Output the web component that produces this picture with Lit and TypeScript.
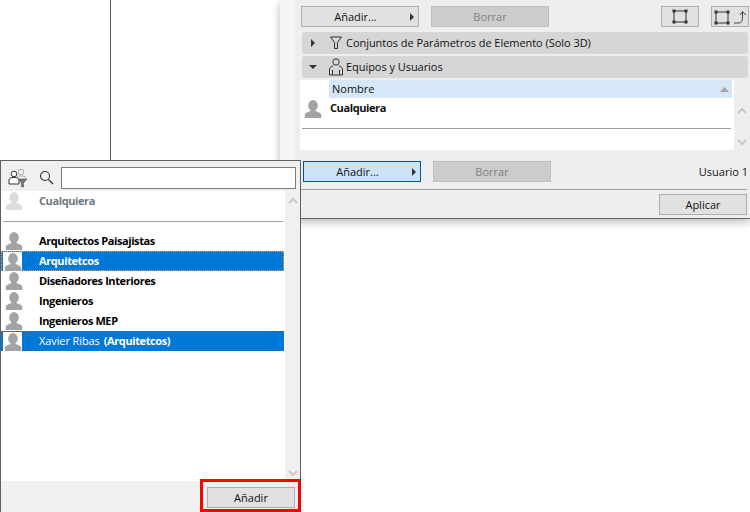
import { LitElement, html, css, svg } from "lit";
import { customElement } from "lit/decorators.js";

const person = (faded = false) => html`<svg class="person ${faded ? "faded" : ""}" viewBox="0 0 18 18" width="18" height="18">
  <ellipse cx="9" cy="5.5" rx="4.8" ry="5.4" fill="currentColor"/>
  <path d="M6.5 9.5 L6.5 11 C4 12 1.2 12.5 .8 14.5 L.8 18 L17.2 18 L17.2 14.5 C16.8 12.5 14 12 11.500 11 L11.500 9.500Z" fill="currentColor"/>
</svg>`;

const tri = svg`<path d="M0 0 L4 4 L0 8Z" fill="#333"/>`;
const arrowRight = html`<svg class="arrow" width="5" height="8" viewBox="0 0 5 8">${tri}</svg>`;
const frame = svg`<path d="M2 2H14V13H2Z" fill="none" stroke="#333" stroke-width="1"/>
  <rect x="0.500" y="0.500" width="3" height="3" fill="#333"/><rect x="12.500" y="0.500" width="3" height="3" fill="#333"/>
  <rect x="0.500" y="11.500" width="3" height="3" fill="#333"/><rect x="12.500" y="11.500" width="3" height="3" fill="#333"/>`;
const chevUp = html`<svg width="10" height="7" viewBox="0 0 10 7"><path d="M1 6 L5 2 L9 6" fill="none" stroke="#c8c8c8" stroke-width="2"/></svg>`;
const chevDown = html`<svg width="10" height="7" viewBox="0 0 10 7"><path d="M1 1 L5 5 L9 1" fill="none" stroke="#c8c8c8" stroke-width="2"/></svg>`;

@customElement("app-root")
export class AppRoot extends LitElement {
  static styles = css`
    :host { display: block; width: 750px; height: 512px; position: relative; overflow: hidden; background: #fff;
      font-family: "Open Sans", "Noto Sans", sans-serif; font-size: 11px; color: #111; }
    * { box-sizing: border-box; }
    .vline { position: absolute; left: 110px; top: 0; width: 1px; height: 160px; background: #555; }
    .main { position: absolute; left: 280px; top: 0; width: 470px; height: 219px; background: linear-gradient(to right, #f5f5f5 15px, #eeeeee 15px);
      border-bottom: 1px solid #666; box-shadow: 0 3px 8px rgba(0,0,0,.28); display: flex; flex-direction: column; }
    .btn { height: 21px; width: 118px; display: flex; align-items: center; justify-content: center; position: relative;
      background: #e1e1e1; border: 1px solid #adadad; }
    .btn.menu { padding-right: 9px; }
    .btn .arrow { position: absolute; right: 3px; top: 6px; }
    .btn.off { background: #cccccc; border-color: #bfbfbf; color: #7f7f7f; }
    .btn.hot { background: #cce4f7; border-color: #005499; }
    .btn.small { width: 88px; }
    .btn.icon { width: 38px; }
    .row1 { display: flex; gap: 12px; margin-top: 6px; padding: 0 1px 0 21px; }
    .spacer { flex: 1; }
    .sec { height: 22px; margin: 0 2px 0 22px; background: #d6d6d6; border-radius: 3px; display: flex; align-items: center; }
    .sec .tw { width: 22px; display: flex; justify-content: center; }
    .sec .ic { width: 22px; padding-left: 2px; display: flex; justify-content: center; }
    .sec .lb { padding-bottom: 2px; letter-spacing: -0.045px; }
    .s1 { margin-top: 5px; }
    .s2 { margin-top: 2px; }
    .table { margin: 2px 0 0 20px; height: 70px; display: flex; }
    .tbody { width: 434px; background: #fff; display: flex; flex-direction: column; }
    .thead { margin-left: 29px; width: 403px; height: 18px; background: #d6e8f7; display: flex; align-items: center; justify-content: space-between; padding: 0 3px 0 3px; }
    .thead span { padding-bottom: 2px; }
    .trow { display: flex; align-items: center; height: 20px; padding-left: 4px; gap: 8px; font-weight: 700; margin-top: -1px; letter-spacing: -0.4px; }
    .trow .person { margin-top: 4px; }
    .tdiv { height: 1px; background: #a0a0a0; margin: 11px 3px 0 2px; }
    .tscroll { flex: 1; display: flex; flex-direction: column; align-items: center; justify-content: space-between; padding: 27px 0 4px; margin-right: 1px; }
    .row2 { display: flex; gap: 12px; align-items: center; margin-top: 11px; padding: 0 2px 0 23px; }
    .hdiv { height: 1px; background: #a0a0a0; margin: 7px 3px 0 21px; }
    .row3 { display: flex; justify-content: flex-end; padding-right: 3px; margin-top: 4px; }
    .person { display: block; color: #a3a3a3; flex: none; filter: blur(.4px); }
    .person.faded { color: #dcdcdc; }

    .pop { position: absolute; left: 0; top: 160px; width: 301px; height: 352px; background: #f0f0f0; border: 1px solid #5f5f5f; border-bottom: 0; display: flex; flex-direction: column; }
    .tools { height: 30px; display: flex; align-items: center; padding: 0 4px 0 7px; }
    .tools .search { margin-left: 11px; display: block; }
    .tools input { margin-left: 7px; flex: 1; min-width: 0; height: 22px; border: 1px solid #7a7a7a; background: #fff; margin-top: 4px; }
    .tools svg { margin-top: 3px; }
    .body { flex: 1; min-height: 0; display: flex; }
    .list { width: 284px; background: #fff; display: flex; flex-direction: column; }
    .scroll { flex: 1; display: flex; flex-direction: column; align-items: center; justify-content: space-between; padding: 6px 0 4px; }
    .item { height: 20px; display: flex; align-items: center; padding: 0 0 2px 38px; position: relative; font-weight: 700; color: #000; flex: none; letter-spacing: -0.4px; }
    .item .person { position: absolute; left: 4px; top: 1px; }
    .item.dis { color: #6f7780; }
    .item.sel { background: #0078d7; color: #fff; margin-right: 1px; }
    .item.focus { outline: 1px dotted #f0a050; outline-offset: -1px; }
    .item.sel .pic { position: absolute; left: 2px; top: 1px; width: 19px; height: 19px; background: #fff; }
    .item.sel .person { left: 3px; top: 2px; }
    .item .nm { font-weight: 400; margin-right: 4px; letter-spacing: -0.1px; }
    .ldiv { height: 1px; background: #a0a0a0; margin: 10px 2px 9px 2px; flex: none; }
    .foot { height: 31px; display: flex; justify-content: flex-end; padding: 6px 5px 0 0; }
    .mark { position: absolute; left: 200px; top: 479px; width: 101px; height: 33px; border: 3px solid #f00; pointer-events: none; }
  `;

  render() {
    return html`
      <div class="vline"></div>
      <section class="main">
        <div class="row1">
          <div class="btn menu">Añadir...${arrowRight}</div>
          <div class="btn off">Borrar</div>
          <div class="spacer"></div>
          <div class="btn icon"><svg width="16" height="15" viewBox="0 0 16 15">${frame}</svg></div>
          <div class="btn icon"><svg width="36" height="17" viewBox="0 0 36 17">
            <g transform="translate(2 2)">${frame}</g>
            <path d="M22 15 H27 C30 15 30.500 12 30.500 9 V4 M28 7 L30.500 3.500 L34 7" fill="none" stroke="#444" stroke-width="1"/>
          </svg></div>
        </div>
        <div class="sec s1">
          <span class="tw">${arrowRight}</span>
          <span class="ic"><svg width="12" height="14" viewBox="0 0 12 14"><path d="M.5 1 H11.500 L7.500 6.500 V12.500 L4.500 12.500 V6.500Z" fill="none" stroke="#333"/></svg></span>
          <span class="lb">Conjuntos de Parámetros de Elemento (Solo 3D)</span>
        </div>
        <div class="sec s2">
          <span class="tw"><svg width="8" height="4" viewBox="0 0 8 4"><path d="M0 0H8L4 4Z" fill="#333"/></svg></span>
          <span class="ic"><svg width="14" height="18" viewBox="0 0 14 18"><circle cx="7" cy="4" r="3.200" fill="none" stroke="#333"/><path d="M4 8 C1 9 .5 10 .5 12 V17 H13.500 V12 C13.500 10 13 9 10 8 M3.500 17 V12 M10.500 17 V12" fill="none" stroke="#333"/></svg></span>
          <span class="lb">Equipos y Usuarios</span>
        </div>
        <div class="table">
          <div class="tbody">
            <div class="thead"><span>Nombre</span><svg width="9" height="5" viewBox="0 0 9 5"><path d="M0 5 L4.500 0 L9 5Z" fill="#a6a6a6"/></svg></div>
            <div class="trow">${person()}<span>Cualquiera</span></div>
            <div class="tdiv"></div>
          </div>
          <div class="tscroll">${chevUp}${chevDown}</div>
        </div>
        <div class="row2">
          <div class="btn hot menu">Añadir...${arrowRight}</div>
          <div class="btn off">Borrar</div>
          <div class="spacer"></div>
          <span>Usuario 1</span>
        </div>
        <div class="hdiv"></div>
        <div class="row3"><div class="btn small">Aplicar</div></div>
      </section>

      <section class="pop">
        <div class="tools">
          <svg width="20" height="20" viewBox="0 0 20 20">
            <circle cx="13" cy="4" r="2.800" fill="none" stroke="#aaa"/>
            <path d="M9 9 C10 8 11 8 13 8 C15 8 17 8 18 10" fill="none" stroke="#aaa"/>
            <circle cx="6" cy="6" r="2.800" fill="#fff" stroke="#333"/>
            <path d="M1 16 V12 C1 10 3 9.500 6 9.500 C9 9.500 11 10 11 12 V16Z" fill="#fff" stroke="#333"/>
            <path d="M10 11 H19 L15.500 15 V19 H13.500 V15Z" fill="#777" stroke="#555" stroke-width=".6"/>
          </svg>
          <svg class="search" width="15" height="15" viewBox="0 0 15 15"><circle cx="6" cy="6" r="4.500" fill="none" stroke="#333" stroke-width="1.100"/><path d="M9.500 9.500 L14 14" stroke="#333" stroke-width="1.200"/></svg>
          <input type="text" aria-label="Buscar" />
        </div>
        <div class="body">
          <div class="list">
            <div class="item dis">${person(true)}Cualquiera</div>
            <div class="ldiv"></div>
            <div class="item">${person()}Arquitectos Paisajistas</div>
            <div class="item sel focus"><span class="pic"></span>${person()}Arquitetcos</div>
            <div class="item">${person()}Diseñadores Interiores</div>
            <div class="item">${person()}Ingenieros</div>
            <div class="item">${person()}Ingenieros MEP</div>
            <div class="item sel"><span class="pic"></span>${person()}<span class="nm">Xavier Ribas</span>(Arquitetcos)</div>
          </div>
          <div class="scroll">${chevUp}${chevDown}</div>
        </div>
        <div class="foot"><div class="btn small">Añadir</div></div>
      </section>
      <div class="mark"></div>
    `;
  }
}
